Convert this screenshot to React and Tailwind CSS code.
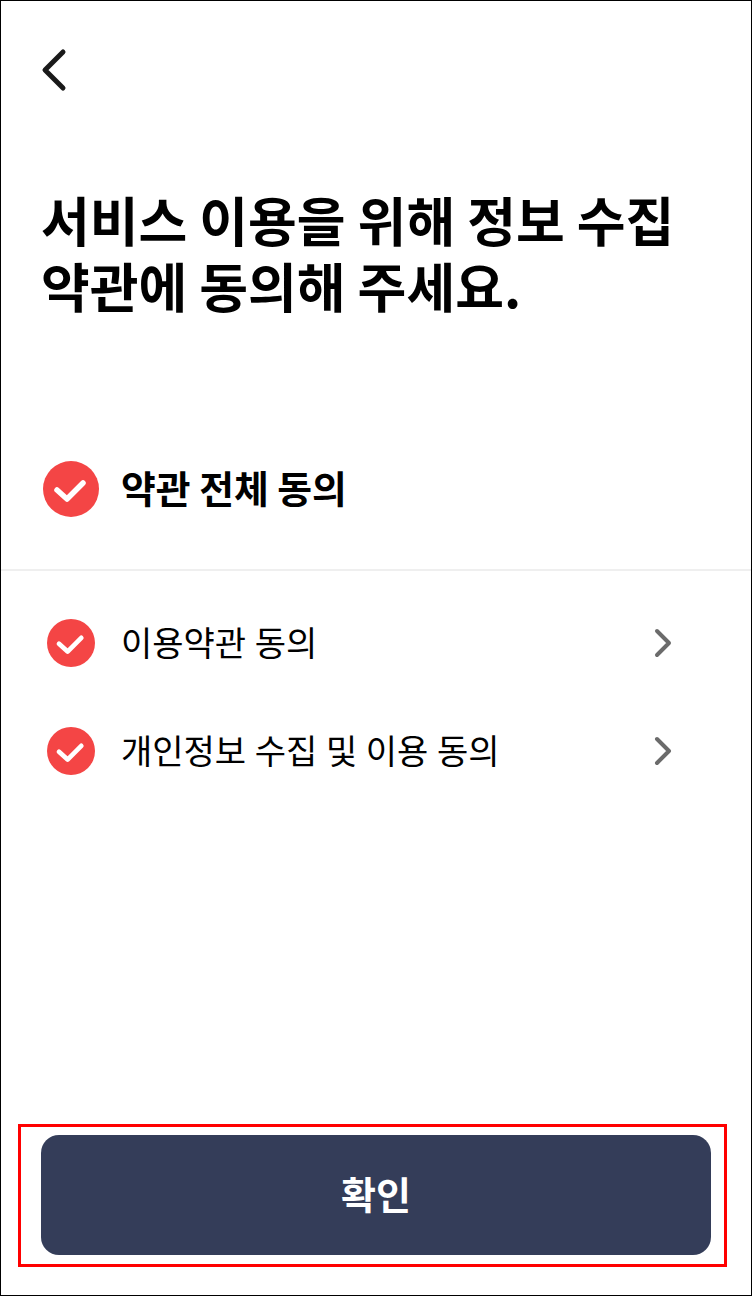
import React from 'react';

function CheckCircle({size}) {
    return (
        <svg width={size} height={size} viewBox="0 0 56 56" className="shrink-0">
            <circle cx="28" cy="28" r="28" fill="#f44545" />
            <path d="M14 29 L24 38 L40 22" fill="none" stroke="#fff" strokeWidth="5.5" strokeLinecap="round" strokeLinejoin="round" />
        </svg>
    );
}

function Chevron({color, width, height, strokeWidth, points}) {
    return (
        <svg width={width} height={height} viewBox={`0 0 ${width} ${height}`} className="shrink-0">
            <polyline points={points} fill="none" stroke={color} strokeWidth={strokeWidth} strokeLinecap="round" strokeLinejoin="round" />
        </svg>
    );
}

const terms = ['이용약관 동의', '개인정보 수집 및 이용 동의'];

export default function App() {
    return (
        <div className="w-[752px] h-[1296px] bg-white border border-black flex flex-col text-black font-['Noto_Sans_CJK_KR','Noto_Sans',sans-serif]">
            <div className="pt-[47px] pl-[40px] h-[93px]">
                <Chevron color="#1a1a1a" width={28} height={44} strokeWidth={5} points="22,4 4,22 22,40" />
            </div>

            <h1 className="mt-[92px] pl-[40px] text-[53px] leading-[66px] font-bold whitespace-nowrap">
                서비스 이용을 위해 정보 수집
                <br />
                약관에 동의해 주세요.
            </h1>

            <div className="mt-[143px] pl-[42px] h-[110px] flex items-start border-b-2 border-[#efefef]">
                <div className="flex items-center gap-[22px]">
                    <CheckCircle size={56} />
                    <span className="text-[37.8px] leading-[52px] pb-[4px] font-bold">약관 전체 동의</span>
                </div>
            </div>

            <ul className="mt-[48px] flex flex-col gap-[60px] pl-[46px] pr-[78px]">
                {terms.map(term => (
                    <li key={term} className="flex items-center h-[48px]">
                        <CheckCircle size={48} />
                        <span className="ml-[26px] text-[34px] leading-[46px] pb-[2px] [word-spacing:1px]">{term}</span>
                        <span className="ml-auto">
                            <Chevron color="#6b6b6b" width={20} height={30} strokeWidth={4} points="4,3 16,15 4,27" />
                        </span>
                    </li>
                ))}
            </ul>

            <div className="mt-auto mb-[28px] ml-[17px] mr-[24px] border-[3px] border-[#ff0000] pt-[8px] pb-[9px] pl-[20px] pr-[13px]">
                <button className="w-full h-[120px] pb-[6px] bg-[#343d59] rounded-[18px] text-white text-[38px] font-bold">확인</button>
            </div>
        </div>
    );
}
